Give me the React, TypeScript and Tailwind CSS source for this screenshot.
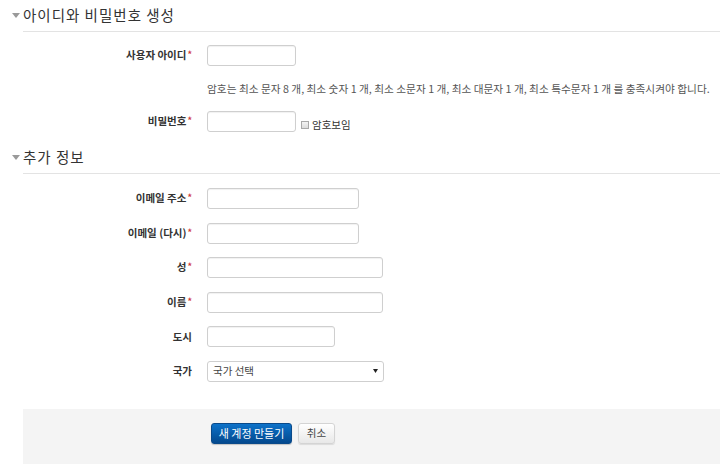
import React from "react";

const font = { fontFamily: '"Noto Sans CJK KR", "Noto Sans", sans-serif' };

function Caret() {
  return (
    <svg width="8" height="5" viewBox="0 0 8 5" className="-ml-[11px] mr-[3px]">
      <path d="M0 0 L8 0 L4 5 Z" fill="#9a9a9a" />
    </svg>
  );
}

function Heading({ title }: { title: string }) {
  return (
    <div className="ml-[23px] h-[32px] border-b border-[#e3e3e3] flex items-center">
      <Caret />
      <span className="text-[14.5px] tracking-[1px] text-[#333] leading-none">{title}</span>
    </div>
  );
}

function Row({
  label,
  required,
  width,
  children,
}: {
  label: string;
  required?: boolean;
  width?: string;
  children?: React.ReactNode;
}) {
  return (
    <div className="flex items-center h-[21px]">
      <div className="w-[193px] pr-[1px] text-right text-[10.5px] font-bold text-[#333] leading-none">
        {label}
        {required && <span className="text-[#d0393b] text-[9px] ml-[1px] align-[1px]">*</span>}
      </div>
      <div className="ml-[14px] flex items-center h-full">
        <div
          className={`h-[21px] ${width} border border-[#cfcfcf] rounded-[3px] bg-white shadow-[inset_0_1px_1px_rgba(0,0,0,0.06)]`}
        />
        {children}
      </div>
    </div>
  );
}

export default function App() {
  return (
    <div className="w-[720px] h-[467px] bg-white overflow-hidden" style={font}>
      <Heading title="아이디와 비밀번호 생성" />

      <div className="mt-[13px]">
        <Row label="사용자 아이디" required width="w-[89px]" />
      </div>

      <p className="mt-[16px] ml-[207px] text-[10.7px] leading-[14px] text-[#555] whitespace-nowrap">
        암호는 최소 문자 8 개, 최소 숫자 1 개, 최소 소문자 1 개, 최소 대문자 1 개, 최소 특수문자 1 개 를 충족시켜야 합니다.
      </p>

      <div className="mt-[15px]">
        <Row label="비밀번호" required width="w-[89px]">
          <div className="ml-[5px] mt-[7px] flex items-center gap-[3px]">
            <span className="w-[8px] h-[8px] border border-[#a9a9a9] bg-gradient-to-b from-[#f4f4f4] to-[#dcdcdc]" />
            <span className="text-[10.5px] text-[#333] leading-none">암호보임</span>
          </div>
        </Row>
      </div>

      <div className="mt-[10px]">
        <Heading title="추가 정보" />
      </div>

      <div className="mt-[14px] flex flex-col gap-[13.6px]">
        <Row label="이메일 주소" required width="w-[152px]" />
        <Row label="이메일 (다시)" required width="w-[152px]" />
        <Row label="성" required width="w-[176px]" />
        <Row label="이름" required width="w-[176px]" />
        <Row label="도시" width="w-[128px]" />
        <div className="flex items-center h-[21px]">
          <div className="w-[193px] pr-[1px] text-right text-[10.5px] font-bold text-[#333] leading-none">
            국가
          </div>
          <div className="ml-[14px] w-[177px] h-[21px] border border-[#cfcfcf] rounded-[3px] bg-white flex items-center justify-between pl-[5px] pr-[5px]">
            <span className="text-[10.5px] text-[#444] leading-none">국가 선택</span>
            <svg width="5" height="4" viewBox="0 0 5 4">
              <path d="M0 0 L5 0 L2.5 4 Z" fill="#222" />
            </svg>
          </div>
        </div>
      </div>

      <div className="mt-[27px] ml-[23px] h-[55px] bg-[#f4f4f4] flex items-start pt-[14px] pl-[188px] gap-[6px]">
        <button className="h-[21px] w-[81px] rounded-[3px] border border-[#0a4a8a] bg-gradient-to-b from-[#0d72c9] to-[#04498e] text-white text-[11px] leading-none shadow-[0_1px_1px_rgba(0,0,0,0.2)]">
          새 계정 만들기
        </button>
        <button className="h-[21px] w-[37px] rounded-[3px] border border-[#d4d4d4] bg-gradient-to-b from-white to-[#e8e8e8] text-[#444] text-[10.5px] leading-none shadow-[0_1px_1px_rgba(0,0,0,0.1)]">
          취소
        </button>
      </div>
    </div>
  );
}
